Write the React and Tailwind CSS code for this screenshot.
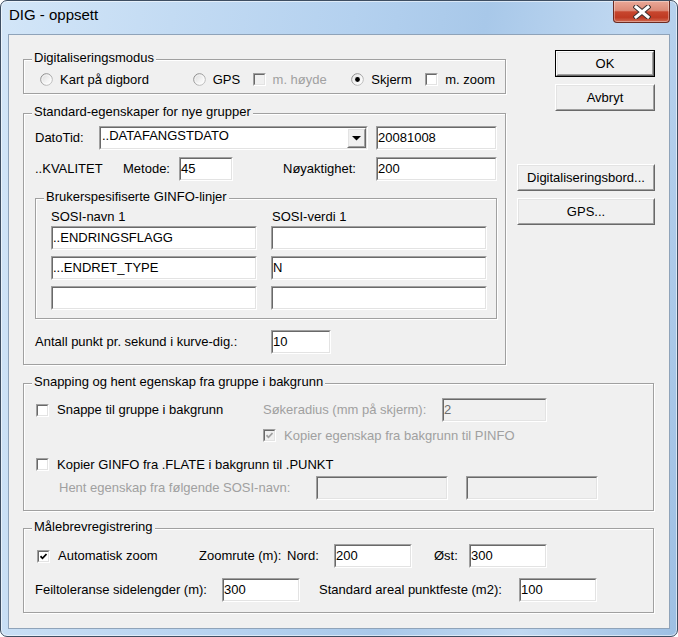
import React from 'react';

const Sunken = ({ className = '', inner = '', children }) => (
  <div className={`border border-t-[#a0a0a0] border-l-[#a0a0a0] border-r-white border-b-white ${className}`}>
    <div className={`h-full border border-t-[#696969] border-l-[#696969] border-r-[#e3e3e3] border-b-[#e3e3e3] ${inner}`}>
      {children}
    </div>
  </div>
);

const Raised = ({ className = '', children }) => (
  <div className={`border border-t-white border-l-white border-r-[#696969] border-b-[#696969] ${className}`}>
    <div className="h-full border border-t-[#e3e3e3] border-l-[#e3e3e3] border-r-[#a0a0a0] border-b-[#a0a0a0] bg-[#f0f0f0] flex items-center justify-center">
      {children}
    </div>
  </div>
);

const Field = ({ w, value = '', disabled = false }) => (
  <Sunken
    className={`${w} h-[24px] shrink-0`}
    inner={`leading-[15px] pt-[2px] whitespace-nowrap ${disabled ? 'bg-[#f0f0f0] text-[#6d6d6d]' : 'bg-white'}`}
  >
    {value}
  </Sunken>
);

const Check = ({ checked = false, disabled = false }) => (
  <Sunken
    className="w-[13px] h-[13px] shrink-0"
    inner={`flex items-center justify-center ${disabled ? 'bg-[#f0f0f0]' : 'bg-white'}`}
  >
    {checked && (
      <svg width="7" height="7" viewBox="0 0 7 7">
        <path d="M0.5 3.2 L2.5 5.3 L6.5 1" fill="none" stroke={disabled ? '#a0a0a0' : '#000'} strokeWidth="1.7" />
      </svg>
    )}
  </Sunken>
);

const Radio = ({ checked = false }) => (
  <svg width="13" height="13" viewBox="0 0 13 13" className="shrink-0">
    <defs>
      <linearGradient id="radioFill" x1="0" y1="0" x2="1" y2="1">
        <stop offset="0" stopColor="#d8d8d8" />
        <stop offset="0.6" stopColor="#f4f4f4" />
        <stop offset="1" stopColor="#ffffff" />
      </linearGradient>
      <linearGradient id="radioRing" x1="0" y1="0" x2="1" y2="1">
        <stop offset="0" stopColor="#7d7d7d" />
        <stop offset="1" stopColor="#c8c8c8" />
      </linearGradient>
    </defs>
    <circle cx="6.5" cy="6.5" r="5.8" fill="url(#radioFill)" stroke="url(#radioRing)" strokeWidth="1" />
    <circle cx="6.5" cy="6.5" r="4.6" fill="none" stroke="#ffffff" strokeOpacity="0.7" strokeWidth="0.8" />
    {checked && <circle cx="6.5" cy="6.5" r="2.4" fill="#000" />}
  </svg>
);

const Group = ({ label, className = '', children }) => (
  <div className={`border border-[#a0a0a0] shadow-[inset_1px_1px_0_#fff,1px_1px_0_#fff] ${className}`}>
    <div className="-mt-[10px] ml-[8px] w-fit px-[2px] bg-[#f0f0f0] leading-[15px] whitespace-nowrap">{label}</div>
    {children}
  </div>
);

const Opt = ({ w, children }) => <div className={`${w} flex items-center gap-[7px] whitespace-nowrap`}>{children}</div>;

export default function App() {
  return (
    <div className="w-[678px] h-[637px] bg-white font-['Liberation_Sans',Arial,sans-serif] text-[13px] text-black">
      <div className="w-full h-full flex flex-col rounded-[7px] border border-[#3e4e62] shadow-[inset_0_0_0_1px_rgba(255,255,255,0.55)] bg-[linear-gradient(100deg,#d3e6f8_0%,#c3dbf3_22%,#b4d1ef_45%,#a8c8e9_62%,#c0d8f1_80%,#9dbfe3_100%)]">
        {/* title bar */}
        <div className="h-[33px] shrink-0 flex justify-between">
          <div className="pl-[8px] pt-[5px] text-[15px] leading-[18px]">DIG - oppsett</div>
          <div className="mr-[7px] w-[57px] h-[22px] rounded-b-[4px] border border-t-0 border-[#6c2b22] bg-[linear-gradient(180deg,#eaa898_0%,#dc8a77_45%,#c7462e_52%,#bf3a23_78%,#d06a52_100%)] shadow-[inset_0_0_0_1px_rgba(255,255,255,0.35)] flex items-center justify-center">
            <svg width="18" height="14" viewBox="0 0 18 14">
              <path d="M3 2 L15 12 M15 2 L3 12" stroke="#3b3030" strokeWidth="5" strokeLinecap="square" />
              <path d="M3 2 L15 12 M15 2 L3 12" stroke="#fff" strokeWidth="3" strokeLinecap="square" />
            </svg>
          </div>
        </div>

        {/* client */}
        <div className="flex-1 mx-[7px] mb-[7px] border border-[#8fa3b9] bg-[#f0f0f0]">
          <div className="pl-[14px]">
            <div className="flex items-start">
              <div className="w-[483px] mt-[24px]">
                <Group label="Digitaliseringsmodus" className="h-[35px]">
                  <div className="mt-[7px] pl-[16px] h-[15px] flex items-center leading-[15px]">
                    <Opt w="w-[153px]"><Radio /><span>Kart på digbord</span></Opt>
                    <Opt w="w-[60px]"><Radio /><span>GPS</span></Opt>
                    <Opt w="w-[99px]"><Check disabled /><span className="text-[#a0a0a0]">m. høyde</span></Opt>
                    <Opt w="w-[74px]"><Radio checked /><span>Skjerm</span></Opt>
                    <Opt w="w-[80px]"><Check /><span>m. zoom</span></Opt>
                  </div>
                </Group>

                <Group label="Standard-egenskaper for nye grupper" className="mt-[19px] h-[252px]">
                  <div className="mt-[7px] pl-[11px] h-[24px] flex items-center">
                    <span className="w-[64px]">DatoTid:</span>
                    <Sunken className="w-[269px] h-[24px]" inner="bg-white flex">
                      <div className="flex-1 leading-[15px] pl-[1px]">..DATAFANGSTDATO</div>
                      <Raised className="w-[19px] h-full">
                        <svg width="9" height="5" viewBox="0 0 9 5">
                          <path d="M0 0 H9 L4.5 4.5 Z" fill="#000" />
                        </svg>
                      </Raised>
                    </Sunken>
                    <div className="ml-[8px]"><Field w="w-[121px]" value="20081008" /></div>
                  </div>

                  <div className="mt-[7px] pl-[11px] h-[24px] flex items-center">
                    <span className="w-[88px]">..KVALITET</span>
                    <span className="w-[56px]">Metode:</span>
                    <Field w="w-[54px]" value="45" />
                    <span className="ml-[50px] w-[93px]">Nøyaktighet:</span>
                    <Field w="w-[121px]" value="200" />
                  </div>

                  <Group label="Brukerspesifiserte GINFO-linjer" className="mt-[17px] ml-[11px] w-[462px] h-[121px]">
                    <div className="mt-[5px] pl-[15px] h-[15px] flex leading-[15px]">
                      <span className="w-[221px]">SOSI-navn 1</span>
                      <span>SOSI-verdi 1</span>
                    </div>
                    <div className="mt-[2px] pl-[15px] flex flex-col gap-[6px]">
                      <div className="flex gap-[14px]">
                        <Field w="w-[206px]" value="..ENDRINGSFLAGG" />
                        <Field w="w-[216px]" />
                      </div>
                      <div className="flex gap-[14px]">
                        <Field w="w-[206px]" value="...ENDRET_TYPE" />
                        <Field w="w-[216px]" value="N" />
                      </div>
                      <div className="flex gap-[14px]">
                        <Field w="w-[206px]" />
                        <Field w="w-[216px]" />
                      </div>
                    </div>
                  </Group>

                  <div className="mt-[11px] pl-[11px] h-[24px] flex items-center">
                    <span className="w-[236px]">Antall punkt pr. sekund i kurve-dig.:</span>
                    <Field w="w-[60px]" value="10" />
                  </div>
                </Group>
              </div>

              <div className="ml-[11px] mt-[15px] w-[138px] flex flex-col items-end">
                <div className="w-[100px] h-[27px] border border-[#000]">
                  <Raised className="h-full">OK</Raised>
                </div>
                <Raised className="mt-[7px] w-[100px] h-[27px]">Avbryt</Raised>
                <Raised className="mt-[53px] w-[138px] h-[27px]">Digitaliseringsbord...</Raised>
                <Raised className="mt-[7px] w-[138px] h-[27px]">GPS...</Raised>
              </div>
            </div>

            <Group label="Snapping og hent egenskap fra gruppe i bakgrunn" className="mt-[18px] w-[631px] h-[128px]">
              <div className="mt-[9px] pl-[12px] h-[24px] flex items-center">
                <div className="w-[227px] flex items-center gap-[8px]">
                  <Check /><span>Snappe til gruppe i bakgrunn</span>
                </div>
                <span className="w-[179px] text-[#a0a0a0]">Søkeradius (mm på skjerm):</span>
                <Field w="w-[105px]" value="2" disabled />
              </div>
              <div className="mt-[6px] pl-[239px] h-[15px] flex items-center gap-[8px] leading-[15px]">
                <Check checked disabled />
                <span className="text-[#a0a0a0]">Kopier egenskap fra bakgrunn til PINFO</span>
              </div>
              <div className="mt-[14px] pl-[12px] h-[15px] flex items-center gap-[8px] leading-[15px]">
                <Check />
                <span>Kopier GINFO fra .FLATE i bakgrunn til .PUNKT</span>
              </div>
              <div className="mt-[4px] pl-[35px] h-[24px] flex items-center">
                <span className="w-[257px] text-[#a0a0a0]">Hent egenskap fra følgende SOSI-navn:</span>
                <Field w="w-[132px]" disabled />
                <div className="ml-[18px]"><Field w="w-[132px]" disabled /></div>
              </div>
            </Group>

            <Group label="Målebrevregistrering" className="mt-[17px] w-[631px] h-[85px]">
              <div className="mt-[10px] pl-[13px] h-[24px] flex items-center">
                <div className="w-[162px] flex items-center gap-[8px]">
                  <Check checked /><span>Automatisk zoom</span>
                </div>
                <span className="w-[88px]">Zoomrute (m):</span>
                <span className="w-[47px]">Nord:</span>
                <Field w="w-[78px]" value="200" />
                <span className="ml-[22px] w-[35px]">Øst:</span>
                <Field w="w-[78px]" value="300" />
              </div>
              <div className="mt-[10px] pl-[11px] h-[24px] flex items-center">
                <span className="w-[187px]">Feiltoleranse sidelengder (m):</span>
                <Field w="w-[78px]" value="300" />
                <span className="ml-[19px] w-[200px]">Standard areal punktfeste (m2):</span>
                <Field w="w-[78px]" value="100" />
              </div>
            </Group>
          </div>
        </div>
      </div>
    </div>
  );
}
